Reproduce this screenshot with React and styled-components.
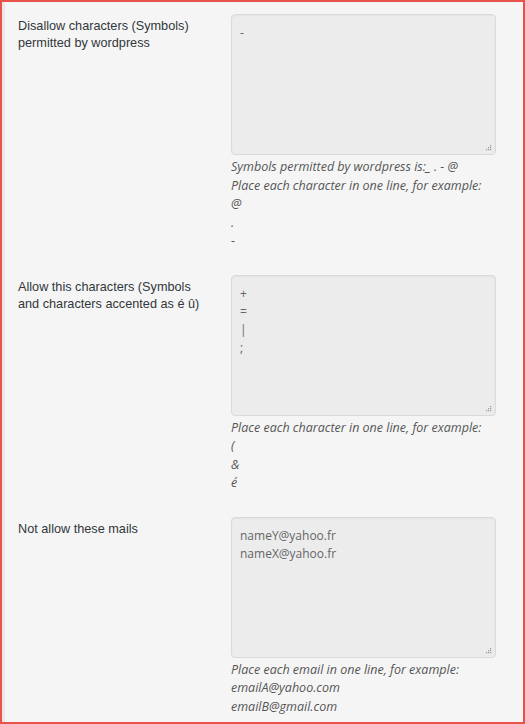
import styled, { createGlobalStyle } from "styled-components";

const GlobalStyle = createGlobalStyle`
  html, body {
    margin: 0;
    padding: 0;
    background: #f5f5f5;
  }
`;

const settings = [
  {
    label: "Disallow characters (Symbols) permitted by wordpress",
    value: "-",
    hint: [
      "Symbols permitted by wordpress is:_ . - @",
      "Place each character in one line, for example:",
      "@",
      ".",
      "-",
    ],
  },
  {
    label: "Allow this characters (Symbols and characters accented as é û)",
    value: "+\n=\n|\n;",
    hint: ["Place each character in one line, for example:", "(", "&", "é"],
  },
  {
    label: "Not allow these mails",
    value: "nameY@yahoo.fr\nnameX@yahoo.fr",
    hint: [
      "Place each email in one line, for example:",
      "emailA@yahoo.com",
      "emailB@gmail.com",
    ],
  },
];

function Grip() {
  const dots = [
    [6, 0],
    [6, 2],
    [4, 2],
    [6, 4],
    [4, 4],
    [2, 4],
  ];
  return (
    <GripIcon width="8" height="6" viewBox="0 0 8 6">
      {dots.map(([x, y]) => (
        <rect key={`${x}-${y}`} x={x} y={y} width="1.2" height="1.2" fill="#9a9a9a" />
      ))}
    </GripIcon>
  );
}

export default function App() {
  return (
    <>
      <GlobalStyle />
      <Frame>
        {settings.map((item) => (
          <Row key={item.label}>
            <Label>{item.label}</Label>
            <Field>
              <AreaWrap>
                <TextArea defaultValue={item.value} readOnly />
                <Grip />
              </AreaWrap>
              <Hint>
                {item.hint.map((line, i) => (
                  <HintLine key={i}>{line}</HintLine>
                ))}
              </Hint>
            </Field>
          </Row>
        ))}
      </Frame>
    </>
  );
}

const Frame = styled.div`
  box-sizing: border-box;
  width: 525px;
  height: 724px;
  border: 2px solid #e9514b;
  background: #f5f5f5;
  box-shadow: inset 3px 0 0 #e9e9e9;
  padding: 0 0 0 16px;
  overflow: hidden;
`;

const Row = styled.div`
  display: grid;
  grid-template-columns: 213px 265px;
  padding: 12px 0;
`;

const Label = styled.div`
  padding-top: 4px;
  padding-right: 20px;
  font-family: "Liberation Sans", Arial, sans-serif;
  font-size: 12.7px;
  line-height: 17px;
  color: #32373c;
`;

const Field = styled.div`
  display: flex;
  flex-direction: column;
`;

const AreaWrap = styled.div`
  position: relative;
  height: 141px;
`;

const TextArea = styled.textarea`
  box-sizing: border-box;
  width: 100%;
  height: 100%;
  margin: 0;
  padding: 9px 8px;
  border: 1px solid #dadada;
  border-radius: 4px;
  background: #ececec;
  box-shadow: inset 0 1px 2px rgba(0, 0, 0, 0.04);
  font-family: "Open Sans", sans-serif;
  font-size: 12px;
  line-height: 18px;
  color: #666;
  resize: none;
  outline: none;
  overflow: hidden;
`;

const GripIcon = styled.svg`
  position: absolute;
  right: 4px;
  bottom: 4px;
`;

const Hint = styled.div`
  margin-top: 3px;
  font-family: "Open Sans", sans-serif;
  font-style: italic;
  font-size: 12.5px;
  line-height: 18.5px;
  color: #555;
`;

const HintLine = styled.div`
  white-space: nowrap;
`;
